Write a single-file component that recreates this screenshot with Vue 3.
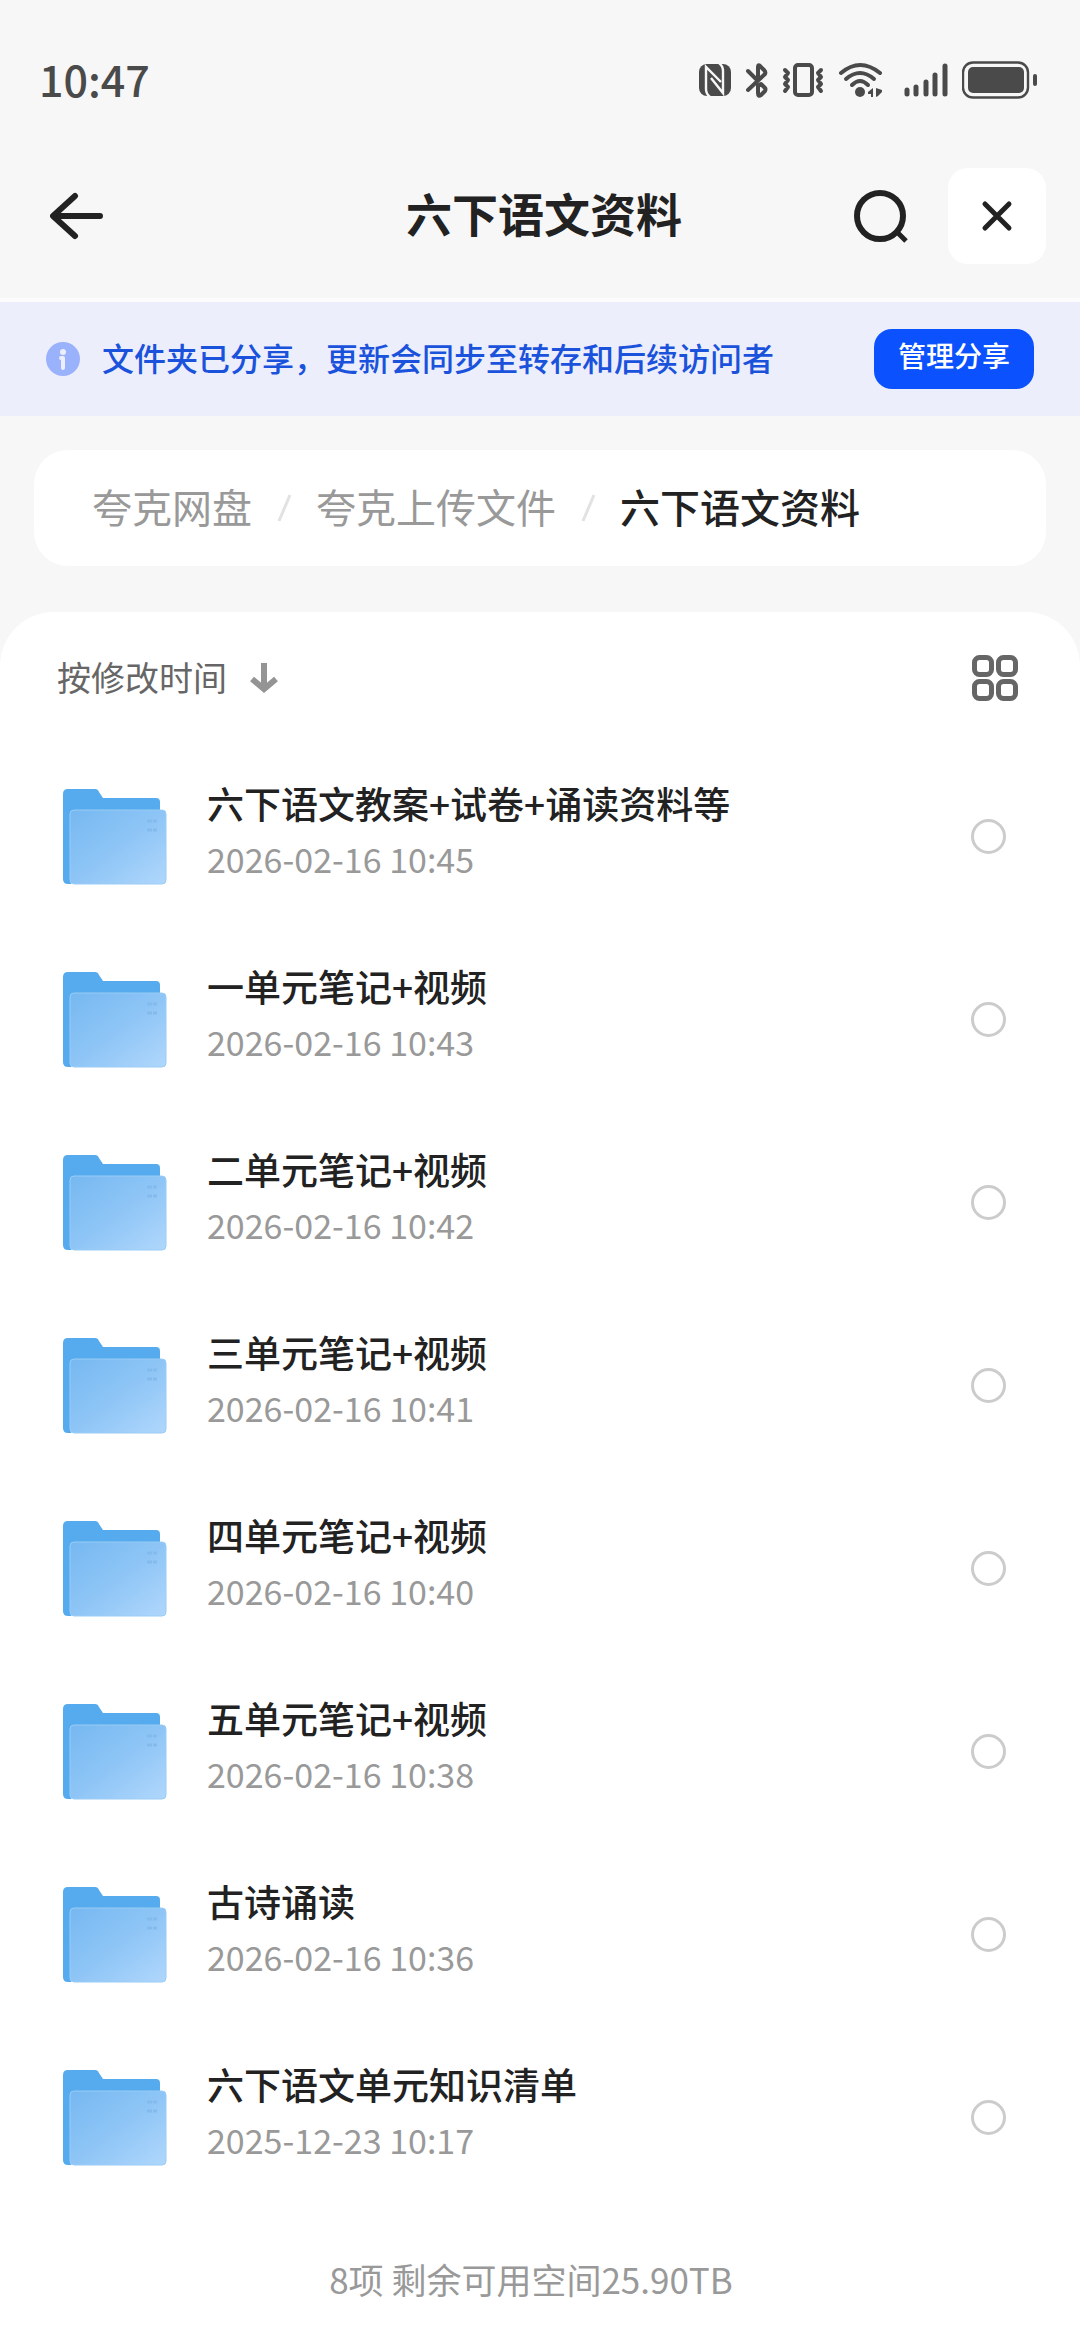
<script setup>
import { ref } from 'vue'

const crumbs = ['夸克网盘', '夸克上传文件', '六下语文资料']

const folders = ref([
    { name: '六下语文教案+试卷+诵读资料等', time: '2026-02-16 10:45', checked: false },
    { name: '一单元笔记+视频', time: '2026-02-16 10:43', checked: false },
    { name: '二单元笔记+视频', time: '2026-02-16 10:42', checked: false },
    { name: '三单元笔记+视频', time: '2026-02-16 10:41', checked: false },
    { name: '四单元笔记+视频', time: '2026-02-16 10:40', checked: false },
    { name: '五单元笔记+视频', time: '2026-02-16 10:38', checked: false },
    { name: '古诗诵读', time: '2026-02-16 10:36', checked: false },
    { name: '六下语文单元知识清单', time: '2025-12-23 10:17', checked: false },
])
</script>

<template>
    <div class="page">
        <div class="status-bar">
            <span class="clock">10:47</span>
            <div class="status-icons">
                <!-- nfc -->
                <svg class="nfc" width="33" height="34" viewBox="0 0 33 34">
                    <rect x="0" y="1" width="32" height="32" rx="8" fill="#4a4a4a" />
                    <path d="M11 34 Q7 31 7 26 V4 L22 19" fill="none" stroke="#f7f7f7" stroke-width="2.4" />
                    <path d="M20 0 Q24 3 24 8 V30 L12 15" fill="none" stroke="#f7f7f7" stroke-width="2.4" />
                </svg>
                <!-- bluetooth -->
                <svg class="bluetooth" width="22" height="36" viewBox="0 0 22 36">
                    <path
                        d="M2 9 L11 18 M2 28 L19 12 Q20 10 18 8 L14 4 Q12 2 12 5 V16 M12 24 V31 Q12 35 15 33 L19 29 Q20 27 19 26 L15 22 Z"
                        fill="none" stroke="#4a4a4a" stroke-width="4" stroke-linecap="round"
                        stroke-linejoin="round" />
                </svg>
                <!-- vibrate -->
                <svg class="vibrate" width="42" height="36" viewBox="0 0 42 36">
                    <rect x="13" y="3" width="17" height="30" rx="3" fill="none" stroke="#4a4a4a" stroke-width="4" />
                    <path d="M3 8 L6 11 L3 15 L6 18 L3 22 L6 25 L3 29 M39 8 L36 11 L39 15 L36 18 L39 22 L36 25 L39 29"
                        fill="none" stroke="#4a4a4a" stroke-width="4" stroke-linecap="round" stroke-linejoin="round" />
                </svg>
                <!-- wifi -->
                <svg class="wifi" width="44" height="36" viewBox="0 0 44 36">
                    <g fill="none" stroke="#4a4a4a" stroke-width="4" stroke-linecap="round">
                        <path d="M3 11 Q22 -5 42 11" />
                        <path d="M8 17 Q22 5 36 17" />
                        <path d="M14 23 Q22 15 30 23" />
                    </g>
                    <circle cx="22" cy="30" r="5" fill="#4a4a4a" />
                    <path d="M35 26 V35 H33 V32 H30 V30 Z M38 26 L44 28 V30 L40 34 L38 35 Z" fill="#4a4a4a" />
                </svg>
                <!-- signal -->
                <svg class="signal" width="44" height="36" viewBox="0 0 44 36">
                    <g stroke="#4a4a4a" stroke-width="5" stroke-linecap="round">
                        <path d="M3 28 V32" />
                        <path d="M12 25 V32" />
                        <path d="M22 20 V32" />
                        <path d="M31 13 V32" />
                        <path d="M41 4 V32" />
                    </g>
                </svg>
                <!-- battery -->
                <svg class="battery" width="76" height="38" viewBox="0 0 76 38">
                    <rect x="1" y="1.5" width="65" height="35" rx="10" fill="none" stroke="#4a4a4a" stroke-width="2.4" />
                    <rect x="6" y="6" width="56" height="26" rx="5" fill="#4a4a4a" />
                    <rect x="71" y="13" width="4" height="12" rx="2" fill="#4a4a4a" />
                </svg>
            </div>
        </div>

        <header class="header">
            <button class="icon-btn back" aria-label="返回">
                <svg width="54" height="48" viewBox="0 0 54 48">
                    <path d="M25 4 L3 24 L25 44 M4 24 H50" fill="none" stroke="#222" stroke-width="6" stroke-linecap="round"
                        stroke-linejoin="round" />
                </svg>
            </button>
            <h1>六下语文资料</h1>
            <div class="actions">
                <button class="icon-btn" aria-label="搜索">
                    <svg width="54" height="56" viewBox="0 0 54 56">
                        <circle cx="26" cy="28" r="23" fill="none" stroke="#222" stroke-width="6" />
                        <path d="M43 44 L52 53" fill="none" stroke="#222" stroke-width="5" />
                    </svg>
                </button>
                <button class="icon-btn close" aria-label="关闭">
                    <svg width="32" height="32" viewBox="0 0 32 32">
                        <path d="M4 4 L28 28 M28 4 L4 28" fill="none" stroke="#222" stroke-width="5"
                            stroke-linecap="round" />
                    </svg>
                </button>
            </div>
        </header>

        <div class="notice">
            <svg width="34" height="34" viewBox="0 0 34 34">
                <circle cx="17" cy="17" r="17" fill="#9ab1fb" />
                <circle cx="17" cy="10" r="3" fill="#eceefb" />
                <path d="M15 16 H17 V26" fill="none" stroke="#eceefb" stroke-width="4" stroke-linecap="round"
                    stroke-linejoin="round" />
            </svg>
            <p>文件夹已分享，更新会同步至转存和后续访问者</p>
            <button class="manage">管理分享</button>
        </div>

        <nav class="crumbs">
            <template v-for="(crumb, i) in crumbs" :key="crumb">
                <svg v-if="i > 0" width="16" height="28" viewBox="0 0 16 28">
                    <path d="M14 1 L3 27" stroke="#e2e2e2" stroke-width="3" />
                </svg>
                <a href="#" :class="{ current: i === crumbs.length - 1 }">{{ crumb }}</a>
            </template>
        </nav>

        <main class="panel">
            <div class="toolbar">
                <button class="icon-btn sort">
                    <span>按修改时间</span>
                    <svg width="30" height="32" viewBox="0 0 30 32">
                        <path d="M15 1 V26 M3 17 L15 27 L27 17" fill="none" stroke="#949494" stroke-width="6" />
                    </svg>
                </button>
                <button class="icon-btn" aria-label="宫格视图">
                    <svg width="46" height="46" viewBox="0 0 46 46">
                        <g fill="none" stroke="#666" stroke-width="5">
                            <rect x="2.5" y="2.5" width="17" height="17" rx="5" />
                            <rect x="26.5" y="2.5" width="17" height="17" rx="5" />
                            <rect x="2.5" y="26.5" width="17" height="17" rx="5" />
                            <rect x="26.5" y="26.5" width="17" height="17" rx="5" />
                        </g>
                    </svg>
                </button>
            </div>

            <ul class="list">
                <li v-for="(folder, i) in folders" :key="folder.name">
                    <label class="row" :for="'folder-' + i">
                        <svg width="104" height="96" viewBox="0 0 104 96">
                            <defs>
                                <linearGradient :id="'front-' + i" x1="0" y1="0" x2="1" y2="1">
                                    <stop offset="0" stop-color="#76b8f1" />
                                    <stop offset="0.5" stop-color="#8ec5f6" />
                                    <stop offset="1" stop-color="#b0d7fc" />
                                </linearGradient>
                            </defs>
                            <path
                                d="M0 5 Q0 0 5 0 H32 Q35 0 36 3 L40 9 H93 Q97 9 97 13 V90 H8 V95 H5 Q0 95 0 90 Z"
                                fill="#55abee" />
                            <rect x="7" y="21" width="96" height="74" rx="4" :fill="'url(#front-' + i + ')'"
                                stroke="#9accf5" stroke-width="1" />
                            <path d="M84 32 H94 M84 41 H94" stroke="#84bbee" stroke-width="3" stroke-dasharray="5 1" />
                        </svg>
                        <span class="info">
                            <span class="name">{{ folder.name }}</span>
                            <span class="time">{{ folder.time }}</span>
                        </span>
                        <input :id="'folder-' + i" v-model="folder.checked" type="checkbox">
                    </label>
                </li>
            </ul>

            <p class="summary">8项 剩余可用空间25.90TB</p>
        </main>
    </div>
</template>

<style>
body {
    margin: 0;
    background: #f7f7f7;
}
</style>

<style scoped>
.page {
    display: flex;
    flex-direction: column;
    min-height: 100vh;
    font-family: "Noto Sans CJK SC", sans-serif;
    color: #222;
}

svg {
    display: block;
    flex-shrink: 0;
}

p,
h1,
ul {
    margin: 0;
    padding: 0;
}

.icon-btn {
    display: flex;
    align-items: center;
    padding: 0;
    border: none;
    background: none;
    font-family: inherit;
}

.status-bar {
    display: flex;
    align-items: center;
    justify-content: space-between;
    height: 160px;
    padding: 0 42px 0 39px;
}

.clock {
    padding-bottom: 4px;
    font-size: 43px;
    font-weight: 500;
    color: #4a4a4a;
}

.status-icons {
    display: flex;
    align-items: center;
    gap: 14px;
}

.signal {
    margin-left: 8px;
}

.header {
    display: grid;
    grid-template-columns: 1fr auto 1fr;
    align-items: center;
    padding: 8px 34px 34px 42px;
}

.back {
    padding-left: 8px;
}

h1 {
    padding-bottom: 8px;
    font-size: 46px;
    font-weight: 700;
    line-height: 60px;
}

.actions {
    display: flex;
    align-items: center;
    justify-content: flex-end;
    gap: 40px;
}

.close {
    justify-content: center;
    width: 98px;
    height: 96px;
    border-radius: 20px;
    background: #fff;
}

.notice {
    display: flex;
    align-items: center;
    gap: 22px;
    padding: 27px 46px;
    border-top: 4px solid #fcfcfd;
    background: #eceefb;
}

.notice p {
    flex: 1;
    padding-bottom: 4px;
    font-size: 32px;
    font-weight: 500;
    line-height: 40px;
    color: #1a52dc;
}

.manage {
    width: 160px;
    height: 60px;
    padding: 0 0 8px;
    border: none;
    border-radius: 18px;
    background: #0b52fe;
    font-family: inherit;
    font-size: 28px;
    font-weight: 500;
    color: #fff;
}

.crumbs {
    display: flex;
    align-items: center;
    gap: 24px;
    margin: 34px 34px 46px;
    padding: 28px 58px;
    border-radius: 34px;
    background: #fff;
    font-size: 40px;
    line-height: 56px;
}

.crumbs a {
    padding-bottom: 4px;
    color: #999;
    text-decoration: none;
}

.crumbs .current {
    font-weight: 500;
    color: #222;
}

.panel {
    flex: 1;
    border-radius: 54px 54px 0 0;
    background: #fff;
}

.toolbar {
    display: flex;
    align-items: center;
    justify-content: space-between;
    height: 132px;
    padding: 0 62px 0 57px;
}

.sort {
    gap: 22px;
    font-size: 34px;
    color: #666;
}

.sort span {
    padding-bottom: 4px;
}

.list {
    padding-top: 1px;
    list-style: none;
}

.row {
    display: flex;
    align-items: center;
    height: 183px;
    padding: 0 74px 0 63px;
}

.info {
    display: flex;
    flex: 1;
    flex-direction: column;
    gap: 8px;
    padding: 0 40px 12px;
}

.name {
    font-size: 37px;
    font-weight: 500;
    line-height: 48px;
}

.time {
    font-size: 34px;
    line-height: 48px;
    color: #999;
}

input {
    width: 35px;
    height: 35px;
    margin: 0;
    border: 3px solid #ccc;
    border-radius: 50%;
    appearance: none;
}

input:checked {
    border-color: #0b52fe;
    background: #0b52fe;
}

.summary {
    padding: 46px 18px 32px 0;
    font-size: 35px;
    line-height: 48px;
    text-align: center;
    color: #999;
}
</style>
